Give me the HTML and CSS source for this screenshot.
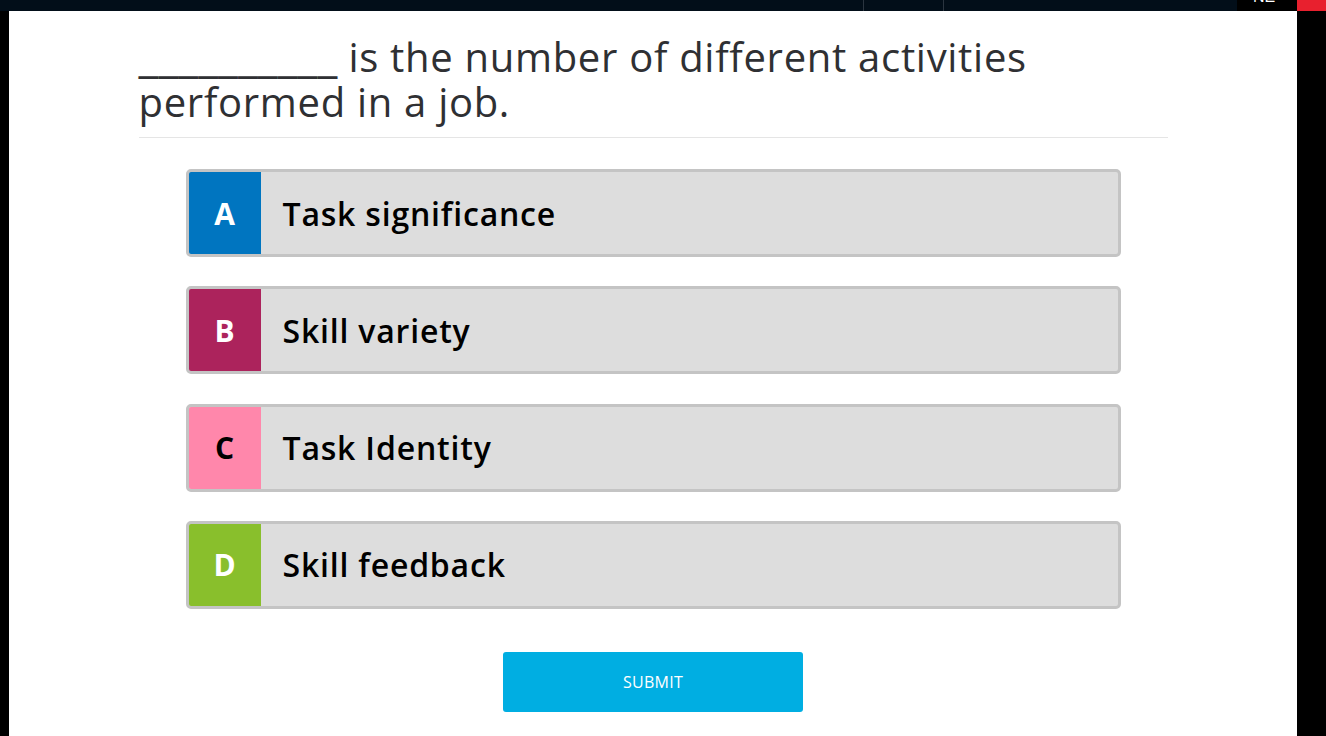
FILE: index.html
```html
<!DOCTYPE html>
<html>
<head>
<meta charset="utf-8">
<link rel="stylesheet" href="styles.css">
</head>
<body>
<header class="topbar">
  <div class="seg seg-main"></div>
  <div class="seg seg-mid"></div>
  <div class="seg seg-fill"></div>
  <div class="user"><span class="user-text">NE</span></div>
  <div class="alert"></div>
</header>
<div class="frame">
  <main class="content">
    <h1 class="question"><span class="blank">__________</span> is the number of different activities performed in a job.</h1>
    <div class="options">
      <div class="option"><span class="letter letter-a">A</span><span class="label">Task significance</span></div>
      <div class="option"><span class="letter letter-b">B</span><span class="label">Skill variety</span></div>
      <div class="option"><span class="letter letter-c">C</span><span class="label">Task Identity</span></div>
      <div class="option"><span class="letter letter-d">D</span><span class="label">Skill feedback</span></div>
    </div>
    <div class="actions"><button class="submit">SUBMIT</button></div>
  </main>
</div>
</body>
</html>
```
FILE: styles.css
```css
html, body {
  margin: 0;
  padding: 0;
  background: #000;
  height: 100%;
  overflow: hidden;
}
body {
  font-family: "Open Sans", Lato, sans-serif;
  font-variant-ligatures: none;
}
.topbar {
  display: flex;
  height: 11px;
  background: #020e19;
}
.seg {
  height: 100%;
}
.seg-main {
  width: 863px;
  border-right: 1px solid #2b3540;
}
.seg-mid {
  width: 79px;
  border-right: 1px solid #2b3540;
}
.seg-fill {
  flex: 1;
}
.user {
  width: 60px;
  background: #000;
  overflow: hidden;
  position: relative;
}
.user-text {
  position: absolute;
  left: 16px;
  top: -11px;
  color: #fff;
  font-family: "Liberation Sans", sans-serif;
  font-size: 16px;
  line-height: 16px;
}
.alert {
  width: 29px;
  background: #e8202e;
}
.frame {
  display: flex;
  height: 725px;
}
.content {
  margin-left: 9px;
  width: 1288px;
  background: #fff;
  display: flex;
  flex-direction: column;
  align-items: center;
}
.question {
  width: 1029px;
  margin: 23px 0 0 0;
  padding: 0 0 13px 0;
  border-bottom: 1px solid #e5e5e5;
  font-weight: 400;
  font-size: 40px;
  line-height: 45px;
  letter-spacing: 0.7px;
  color: #2f3033;
  box-sizing: border-box;
}
.blank {
  font-size: 45.4px;
  line-height: 30px;
  letter-spacing: 0;
}
.options {
  width: 935px;
  margin-top: 31px;
  display: flex;
  flex-direction: column;
  gap: 29.3px;
}
.option {
  display: flex;
  align-items: stretch;
  height: 88px;
  box-sizing: border-box;
  border: 3px solid #c4c4c4;
  border-radius: 5px;
  background: #dddddd;
  overflow: hidden;
}
.letter {
  width: 72px;
  flex: none;
  display: flex;
  align-items: center;
  justify-content: center;
  color: #fff;
  font-weight: 700;
  font-size: 30px;
}
.letter-a { background: #0075c0; }
.letter-b { background: #ac235c; }
.letter-c { background: #ff87ab; color: #000; }
.letter-d { background: #89bf2c; }
.label {
  display: flex;
  align-items: center;
  padding-left: 22px;
  font-weight: 600;
  font-size: 32px;
  letter-spacing: 0.8px;
  color: #000;
}
.actions {
  margin-top: 43px;
  display: flex;
  justify-content: center;
}
.submit {
  width: 300px;
  height: 60px;
  border: 0;
  border-radius: 3px;
  background: #00aee2;
  color: #fff;
  font-family: "Open Sans", sans-serif;
  font-size: 16px;
  letter-spacing: 0.3px;
}
```
